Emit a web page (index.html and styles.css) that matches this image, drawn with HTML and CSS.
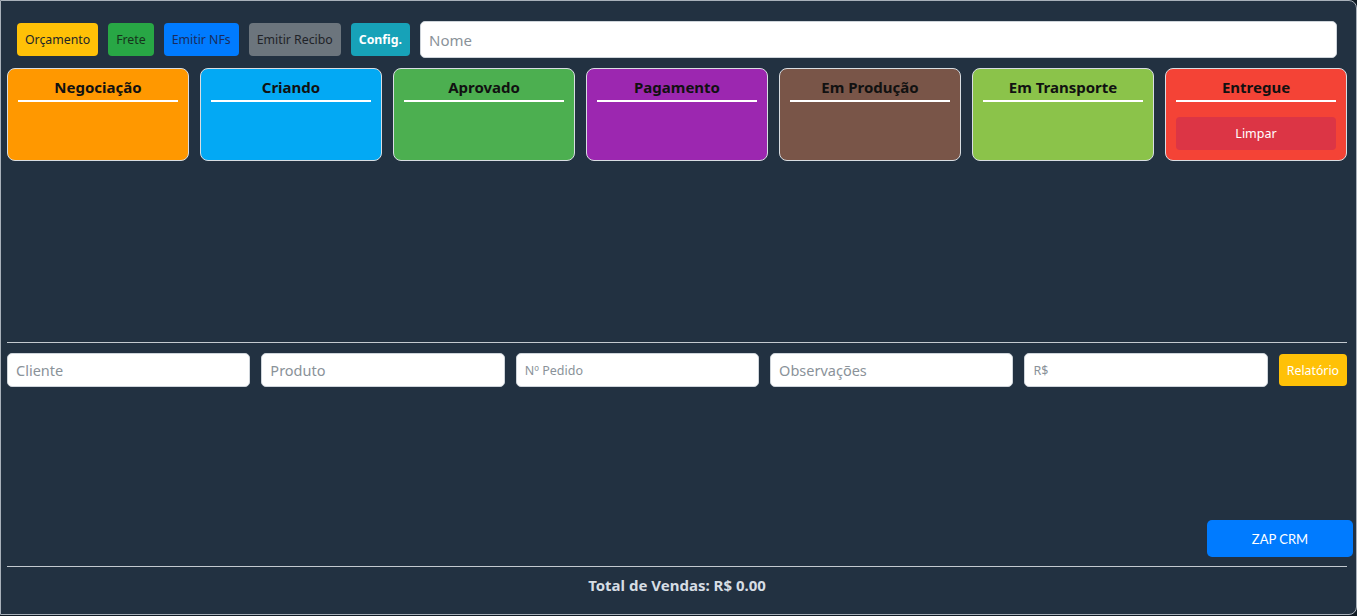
FILE: index.html
```html
<!DOCTYPE html>
<html lang="pt">
<head>
<meta charset="utf-8">
<title>CRM</title>
<link rel="stylesheet" href="styles.css">
</head>
<body>
<div class="app">
  <div class="toolbar">
    <button class="btn btn-yellow">Orçamento</button>
    <button class="btn btn-green">Frete</button>
    <button class="btn btn-blue">Emitir NFs</button>
    <button class="btn btn-gray">Emitir Recibo</button>
    <button class="btn btn-teal">Config.</button>
    <input class="field field-name" type="text" placeholder="Nome">
  </div>

  <div class="board">
    <div class="col c-orange"><h3 class="col-title">Negociação</h3></div>
    <div class="col c-sky"><h3 class="col-title">Criando</h3></div>
    <div class="col c-green"><h3 class="col-title">Aprovado</h3></div>
    <div class="col c-purple"><h3 class="col-title">Pagamento</h3></div>
    <div class="col c-brown"><h3 class="col-title">Em Produção</h3></div>
    <div class="col c-lime"><h3 class="col-title">Em Transporte</h3></div>
    <div class="col c-red"><h3 class="col-title">Entregue</h3><button class="btn-clear">Limpar</button></div>
  </div>

  <hr class="rule rule-top">

  <div class="form-row">
    <input class="field" type="text" placeholder="Cliente">
    <input class="field" type="text" placeholder="Produto">
    <input class="field field-sm" type="text" placeholder="Nº Pedido">
    <input class="field" type="text" placeholder="Observações">
    <input class="field field-sm" type="text" placeholder="R$">
    <button class="btn-report">Relatório</button>
  </div>

  <div class="zap-row">
    <button class="btn-zap">ZAP CRM</button>
  </div>

  <hr class="rule rule-bottom">

  <div class="total">Total de Vendas: R$ 0.00</div>
</div>
</body>
</html>
```

FILE: styles.css
```css
* { box-sizing: border-box; }

html, body {
  margin: 0;
  padding: 0;
  background: #0f1a24;
}

body {
  font-family: "Noto Sans", "Open Sans", sans-serif;
}

.app {
  width: 1357px;
  height: 615px;
  background: #223141;
  border: 1px solid #a9b1ba;
  border-radius: 0 8px 8px 0;
  padding: 0 9px 0 6px;
  display: flex;
  flex-direction: column;
}

.toolbar {
  display: flex;
  align-items: center;
  gap: 10px;
  margin-top: 20px;
  padding: 0 10px;
  height: 37px;
}

.btn {
  border: none;
  border-radius: 4px;
  height: 33px;
  padding: 0 8px;
  font-family: "Noto Sans", sans-serif;
  font-size: 12.3px;
  cursor: pointer;
}
.btn-yellow { background: #ffc107; color: #212529; }
.btn-green { background: #28a745; color: #16331c; }
.btn-blue { background: #007bff; color: #1a2c5c; }
.btn-gray { background: #6c757d; color: #1f2328; }
.btn-teal { background: #17a2b8; color: #ffffff; font-weight: 700; }

.field {
  flex: 1;
  height: 34px;
  border: 1px solid #ced4da;
  border-radius: 5px;
  background: #fff;
  padding: 0 8px;
  font-family: "Noto Sans", sans-serif;
  font-size: 14.5px;
  color: #333;
}
.field::placeholder { color: #8a9299; }
.field-name { height: 37px; font-size: 15px; }
.field-sm { font-size: 12.5px; }

.board {
  display: flex;
  gap: 11px;
  margin-top: 10px;
}

.col {
  flex: 1;
  height: 93px;
  border: 1px solid #d8dde2;
  border-radius: 8px;
  padding: 8px 10px 10px;
}

.col-title {
  margin: 0 0 15px;
  padding-bottom: 3px;
  border-bottom: 2px solid #ffffff;
  text-align: center;
  font-size: 15px;
  font-weight: 700;
  color: #111;
  line-height: 20px;
}

.c-orange { background: #ff9800; }
.c-sky { background: #03a9f4; }
.c-green { background: #4caf50; }
.c-purple { background: #9c27b0; }
.c-brown { background: #795548; }
.c-lime { background: #8bc34a; }
.c-red { background: #f44336; }

.btn-clear {
  display: block;
  width: 100%;
  height: 33px;
  border: none;
  border-radius: 4px;
  background: #dc3545;
  color: #fff;
  font-family: "Noto Sans", sans-serif;
  font-size: 12.5px;
}

.rule {
  border: 0;
  border-top: 1px solid #c3c9cf;
  margin: 0;
  width: 100%;
}
.rule-top { margin-top: 181px; }

.form-row {
  display: flex;
  gap: 11px;
  align-items: center;
  margin-top: 10px;
}

.btn-report {
  height: 32px;
  border: none;
  border-radius: 4px;
  background: #ffc107;
  color: #fff;
  padding: 0 8px;
  font-family: "Noto Sans", sans-serif;
  font-size: 12.3px;
}

.zap-row {
  display: flex;
  justify-content: flex-end;
  margin-top: 133px;
  margin-right: -6px;
}

.btn-zap {
  width: 146px;
  height: 37px;
  border: none;
  border-radius: 5px;
  background: #007bff;
  color: #fff;
  font-family: Lato, sans-serif;
  font-size: 13px;
}

.rule-bottom { margin-top: 9px; }

.total {
  text-align: center;
  font-size: 15px;
  font-weight: 700;
  color: #d6dde4;
  margin-top: 8px;
  line-height: 20px;
}
```
